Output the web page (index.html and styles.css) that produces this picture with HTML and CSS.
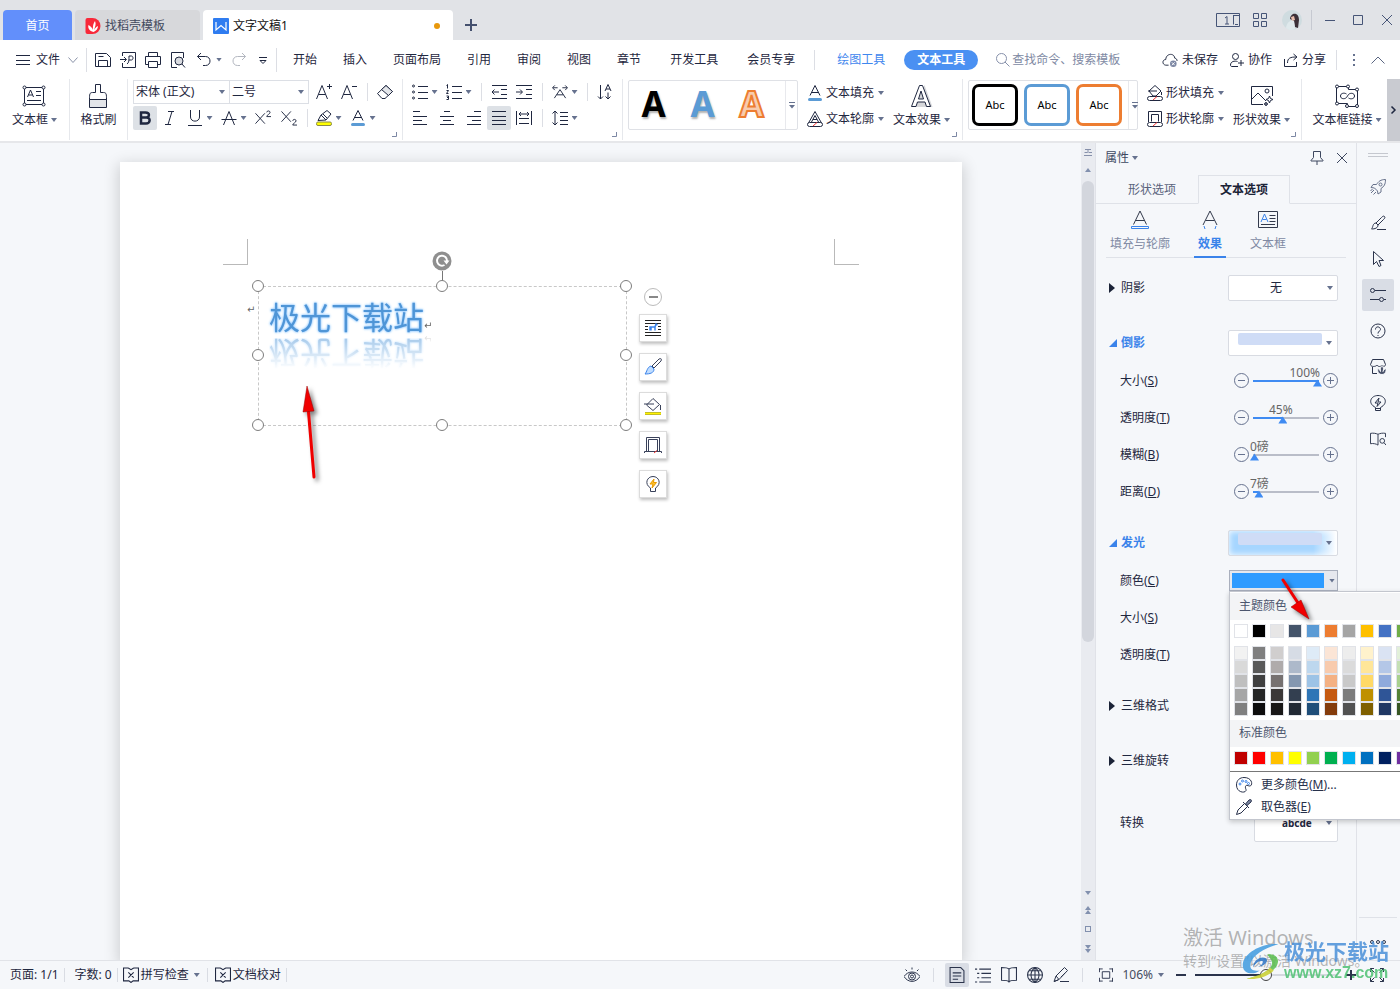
FILE: index.html
```html
<!DOCTYPE html>
<html lang="zh-CN">
<head>
<meta charset="utf-8">
<title>文字文稿1</title>
<link rel="stylesheet" href="styles.css">
</head>
<body>
<svg class="sprite" aria-hidden="true">
  <symbol id="plus" viewBox="0 0 12 12"><path d="M6 0v12M0 6h12" stroke-width="2"/></symbol>
  <symbol id="menu" viewBox="0 0 14 12"><path d="M0 1.500h14M0 6.500h14M0 10.500h14"/></symbol>
  <symbol id="down" viewBox="0 0 10 6"><path d="M.5.5 5 5.500 9.500.5"/></symbol>
  <symbol id="up" viewBox="0 0 14 8"><path d="M.5 7.500 7 1l6.500 6.500"/></symbol>
  <symbol id="save" viewBox="0 0 16 16"><path d="M.5 1.500h11l4 4v9h-15zM3.500 14.500v-6h9v6M3.500 4.500h5"/></symbol>
  <symbol id="pdf" viewBox="0 0 16 16"><path d="M2.500 4V.5h13v15h-13V11M0 7.500h6M4 5l2.500 2.500L4 10M7 12c2-1 2-4 2-8h2.500c2 0 2 4 0 4H9"/></symbol>
  <symbol id="print" viewBox="0 0 16 16"><path d="M3.500 4.500v-4h9v4M3.500 12.500h-3v-8h15v8h-3M3.500 9.500h9v6h-9z"/></symbol>
  <symbol id="preview" viewBox="0 0 16 16"><path d="M7 15.500H1.500V.5h12V6M12 12l3 3.500"/><circle cx="9" cy="9" r="4" fill="#d9dbe0"/></symbol>
  <symbol id="undo" viewBox="0 0 16 16"><path d="M5 1 1.500 4.500 5 8M1.500 4.500h8c6 0 6 9 0 9H7"/></symbol>
  <symbol id="redo" viewBox="0 0 16 16"><path d="M11 1l3.500 3.500L11 8M14.500 4.500h-8c-6 0-6 9 0 9H9"/></symbol>
  <symbol id="more" viewBox="0 0 8 8"><path d="M0 1.500h8M1 4.500l3 3 3-3z"/></symbol>
  <symbol id="gmore" viewBox="0 0 6 7"><path d="M0 .5h6"/><path d="M0 3h6L3 6.500z" fill="currentColor" stroke="none"/></symbol>
  <symbol id="search" viewBox="0 0 14 14"><circle cx="5.500" cy="5.500" r="5"/><path d="M9 9l4.500 4.500"/></symbol>
  <symbol id="cloud" viewBox="0 0 17 16"><path d="M7 13.500H4C0 13 0 7.500 4 7.500 4 1 13 0 13.500 6c2 .5 2.500 1.500 2.500 3"/><circle cx="12" cy="12" r="3.500" fill="#7c87a3" stroke="none"/><path d="M10.500 10.500l3 3m0-3l-3 3" stroke="#fff"/></symbol>
  <symbol id="person" viewBox="0 0 14 14"><circle cx="5.500" cy="3.500" r="3"/><path d="M7.500 8.500c-3-1-7 0-7 3.500 0 1 .5 1.500 1.500 1.500H8M11 7v6M8 10h6"/></symbol>
  <symbol id="share" viewBox="0 0 14 14"><path d="M.5 6v7.500h12V9M3.500 10c0-5 3-6 8.500-6M9.500 1l3.500 3-3.500 3"/></symbol>
  <symbol id="textbox" viewBox="0 0 24 22"><path d="M2.500 2.500h19v17h-19zM5.500 12 8.500 5l3 7M6.500 10h4M14 6.500h5M14 10.500h5M5 15.500h14"/><g fill="#fff"><circle cx="2.500" cy="2.500" r="1.500"/><circle cx="21.500" cy="2.500" r="1.500"/><circle cx="2.500" cy="19.500" r="1.500"/><circle cx="21.500" cy="19.500" r="1.500"/></g></symbol>
  <symbol id="brush" viewBox="0 0 20 24"><path d="M1.500 15.500h17v8h-17z" fill="#e3e5e9"/><path d="M7.500.5h5v8h3c3 0 3 2 3 7h-17c0-5 0-7 3-7h3z"/></symbol>
  <symbol id="agrow" viewBox="0 0 16 16"><path d="M.5 15 6 1.500 11.500 15M2.500 10.500h7M11 2.500h5M13.500 0v5"/></symbol>
  <symbol id="ashrink" viewBox="0 0 16 16"><path d="M.5 15 6 1.500 11.500 15M2.500 10.500h7M11 2.500h5"/></symbol>
  <symbol id="eraser" viewBox="0 0 16 16"><path d="M.5 9.500 9 1.500l6.500 6L8 14.500H5z"/><path d="M4.500 5.500l7 6 4-4-6.500-6z" fill="#e3e5e9"/></symbol>
  <symbol id="bold" viewBox="0 0 12 14"><path d="M2 1.500h4.500c5 0 4 5 .5 5H2h5.500c4.500 0 4 6-.5 6H2z" stroke-width="2.500"/></symbol>
  <symbol id="italic" viewBox="0 0 12 14"><path d="M4 .5h6M1 13.500h6M8 .5 4 13.500"/></symbol>
  <symbol id="under" viewBox="0 0 14 16"><path d="M2.500 0v7c0 5.500 9 5.500 9 0V0M0 15.500h14"/></symbol>
  <symbol id="strike" viewBox="0 0 15 16"><path d="M2 15 7.500 1.500 13 15M0 9.500h15"/></symbol>
  <symbol id="sup" viewBox="0 0 17 16"><path d="M.5 3l10 11M10.500 3l-10 11M12.500 2c0-2 3.500-2 3.500 0s-3.500 2.500-3.500 4.500H17"/></symbol>
  <symbol id="sub" viewBox="0 0 17 16"><path d="M.5 1l10 11M10.500 1l-10 11M12.500 11c0-2 3.500-2 3.500 0s-3.500 2.500-3.500 4.500H17"/></symbol>
  <symbol id="marker" viewBox="0 0 16 16"><path d="M2 10.500 5 5l6-4.500L15 4l-5 6zM5 5l5 5M7 4l4 4"/><rect x=".5" y="12" width="15" height="3.500" rx="1.500" fill="#ffff00" stroke="#8a8a4a"/></symbol>
  <symbol id="acolor" viewBox="0 0 16 16"><path d="M3 10.500 8 .5l5 10M5 7.500h6"/><rect x="1" y="13" width="14" height="3" rx="1.500" fill="#5b9bd5" stroke="none"/></symbol>
  <symbol id="bullets" viewBox="0 0 16 16"><path d="M6 2.500h10M6 8.500h10M6 14.500h10"/><circle cx="1.500" cy="2" r="1"/><circle cx="1.500" cy="8" r="1"/><circle cx="1.500" cy="14" r="1"/></symbol>
  <symbol id="numbers" viewBox="0 0 16 16"><path d="M6 2.500h10M6 8.500h10M6 14.500h10M.5 1.500l1-1v4M.5 6.500h2l-2 3h2M.5 12h2v3.500h-2m.5-2h1.500"/></symbol>
  <symbol id="outdent" viewBox="0 0 16 16"><path d="M1 1.500h15M10 5.500h6M10 10.500h6M1 14.500h15M1 8h7M3.500 5.500 1 8l2.500 2.500"/></symbol>
  <symbol id="indent" viewBox="0 0 16 16"><path d="M0 1.500h16M10 5.500h6M10 10.500h6M0 14.500h16M0 8h6M4 5.500 6.500 8 4 10.500"/></symbol>
  <symbol id="fit" viewBox="0 0 17 16"><path d="M2.500 14.500l6-9 6 9M5 11h7M1 3.500h5M3 1 .5 3.500 3 6M16 3.500h-5M14 1l2.500 2.500L14 6"/></symbol>
  <symbol id="sort" viewBox="0 0 14 16"><path d="M2.500 1v14M0 12.500 2.500 15 5 12.500M7 7l3-6.500L13 7M8 5h4M10 8.500V15M7.500 12.500 10 15l2.500-2.500"/></symbol>
  <symbol id="left" viewBox="0 0 14 14"><path d="M0 .5h7M0 5.500h14M0 9.500h9M0 13.500h14"/></symbol>
  <symbol id="center" viewBox="0 0 14 14"><path d="M4 .5h6M0 5.500h14M3 9.500h8M0 13.500h14"/></symbol>
  <symbol id="right" viewBox="0 0 14 14"><path d="M7 .5h7M0 5.500h14M5 9.500h9M0 13.500h14"/></symbol>
  <symbol id="just" viewBox="0 0 14 14"><path d="M0 .5h14M0 5.500h14M0 9.500h14M0 13.500h14"/></symbol>
  <symbol id="dist" viewBox="0 0 16 14"><path d="M.5 0v14M15.500 0v14M3 7.500h10M3 12.500h10M3 3h10M5 1 3 3l2 2M11 1l2 2-2 2"/></symbol>
  <symbol id="spacing" viewBox="0 0 16 16"><path d="M3 1v14M.5 3.500 3 1l2.500 2.500M.5 12.500 3 15l2.500-2.500M8 2.500h8M8 6.500h8M8 10.500h8M8 14.500h8"/></symbol>
  <symbol id="aout" viewBox="0 0 16 16"><path d="M1.500 12 8 .5 14.500 12M4.500 11 8 4.500l3.500 6.500M6 8.500h4"/><rect x=".5" y="11.500" width="15" height="4" rx="2" fill="#fff"/><path d="M6 15l4-3.500" stroke="#e33"/></symbol>
  <symbol id="afx" viewBox="0 0 24 24"><path d="M5 23 14.500 1l8 22" fill="#d6d7da" stroke="none"/><path d="M1.500 22.500 9.500 1.500h3l8 21h-4l-1.500-4.500H7.500L6 22.500zM8.500 15h5L11 7z" fill="#fff"/></symbol>
  <symbol id="bucket" viewBox="0 0 16 16"><path d="M2 6 8 .5l6 5.500-5 5H6zM1 6h9M14.500 7v3"/><rect x=".5" y="11.500" width="15" height="4" rx="2" fill="#fff"/><path d="M6 15l4-3.500" stroke="#e33"/></symbol>
  <symbol id="frame" viewBox="0 0 16 16"><path d="M1.500 11V.5h13V11M4.500 10.500v-7h7v7"/><rect x=".5" y="11.500" width="15" height="4" rx="2" fill="#fff"/><path d="M6 15l4-3.500" stroke="#e33"/></symbol>
  <symbol id="picfx" viewBox="0 0 24 24"><path d="M13 20.500H1.500V2.500h21V12M2 15l6-6 8 8"/><circle cx="17" cy="7" r="2"/><path d="M19.500 12l1 2.500 2.500 1-2.500 1-1 2.500-1-2.500-2.500-1 2.500-1zM16 18l.5 1.500 1.500.5-1.500.5L16 22l-.5-1.500L14 20l1.500-.5z"/></symbol>
  <symbol id="link" viewBox="0 0 24 24"><path d="M1.500 2.500h12v3h9v17h-10v-3h-11z"/><path d="M11.500 10c-2-1.500-6-1-6 2s4 3.500 6 1.500l2-3c2-2 6-1.500 6 1.500s-4 3.500-6 2"/><g fill="#fff"><circle cx="2" cy="2.500" r="1.500"/><circle cx="13" cy="2.500" r="1.500"/><circle cx="22" cy="5.500" r="1.500"/><circle cx="2" cy="19.500" r="1.500"/><circle cx="12" cy="22" r="1.500"/><circle cx="22" cy="22" r="1.500"/></g></symbol>
  <symbol id="corner" viewBox="0 0 5 5"><path d="M4.500 0v4.500H0"/></symbol>
  <symbol id="close" viewBox="0 0 10 10"><path d="M0 0l10 10M10 0 0 10"/></symbol>
  <symbol id="pin" viewBox="0 0 14 14"><path d="M3.500.5h7v6l2.500 3v.5H1v-.5l2.500-3zM7 10v4"/></symbol>
  <symbol id="p-fill" viewBox="0 0 18 20"><path d="M2.500 14.500 9 1l6.500 13.500M4.500 10.500h9"/><path d="M.5 16.500h17v2H.5z" stroke="#3a83ea"/></symbol>
  <symbol id="p-fx" viewBox="0 0 18 20"><path d="M2 15 9 1l7 14M4.500 10.500h9"/><path d="M3 16l1 3M15 16l-1 3" stroke="#3a83ea"/></symbol>
  <symbol id="p-box" viewBox="0 0 20 18"><path d="M.5.5h19v16H.5zM11.500 4.500h6M11.500 7.500h6M11.500 10.500h6M3 13.500h14"/><path d="M3 11 6.500 3 10 11M4.500 8.500h4" stroke="#3a83ea"/></symbol>
  <symbol id="rocket" viewBox="0 0 16 16"><path d="M15.500.5c-5 0-7 2-9 5H3l-2 3 3.500.5 3 3L8 15l3-2v-3.500c3-2 4.500-4 4.500-9zM4 11l-3 3M2.500 10 .5 12M6 13l-2.500 2.500"/><circle cx="10.500" cy="5.500" r="1.500"/></symbol>
  <symbol id="pen" viewBox="0 0 16 16"><path d="M14.500 1.500c1 1 0 2-1 3L8 10 6 8l5.500-5.500c1-1 2-2 3-1zM6 8l2 2c0 3-3 4-6.500 4 1.500-1 1-6 4.500-6zM7 14.500h9"/></symbol>
  <symbol id="cursor" viewBox="0 0 16 16"><path d="M3.500.5v13l3-3 2.500 5 2-1-2-5h4.500z"/></symbol>
  <symbol id="sliders" viewBox="0 0 16 16"><circle cx="2.500" cy="3.500" r="2"/><circle cx="11.500" cy="12.500" r="2"/><path d="M5 3.500h11M0 12.500h9M14 12.500h2"/></symbol>
  <symbol id="help" viewBox="0 0 16 16"><circle cx="8" cy="8" r="7"/><path d="M5.500 6.500c0-4 5-3 5 0C10.500 8 8 8 8 10.500M8 12v1"/></symbol>
  <symbol id="shop" viewBox="0 0 16 16"><path d="M2.500.5h11l2 5c0 2-2.500 2.500-3.500.5-1 2-4 2-5 0-1 2-6.500 2-6.500-.5zM2.500 8v6.500H7"/><path d="M12 15.500c-3.500 0-5-3-4-6 1 .5 2 1.500 2.500 3-.5-2 0-4.500 1.500-6 1.500 1.500 2 4 1 6 .5-1.500 1.500-2.500 3-3 .5 3-1 6-4 6z" fill="#4a536b" stroke="#f5f7fa"/></symbol>
  <symbol id="bulb" viewBox="0 0 16 16"><path d="M5.500 12.500C-3 8 1 .5 8 .5s11 7.500 2.500 12v3h-5zM5.500 13.500h5"/><path d="M9 3 5 8h3l-1 3.500L11 7H8z"/></symbol>
  <symbol id="book" viewBox="0 0 17 14"><path d="M8.500 2c-2-1-5-1.500-8-1v11c3-.5 6 0 8 1.500V2c2-1 5-1.500 8-1v4"/><circle cx="13" cy="9" r="2.500"/><path d="M15 11l2 2.500"/></symbol>
  <symbol id="check" viewBox="0 0 15 14"><path d="M5 .5H.5v12h5l2 1.500 2-1.500h5V.5H10M5 .5l2.500 1.500L10 .5M5 4.500l5 5M10 4.500l-5 5"/></symbol>
  <symbol id="eye" viewBox="0 0 16 15"><path d="M0 9c4-6 12-6 16 0-4 6.500-12 6.500-16 0zM8 2V0M3 3.500 1.500 2M13 3.500 14.500 2"/><circle cx="8" cy="9" r="3.500"/><circle cx="8" cy="9" r="1.500"/></symbol>
  <symbol id="page" viewBox="0 0 14 15"><path d="M.5.5h10l3 3v11H.5zM3 5.500h8M3 8.500h8M3 11.500h5"/></symbol>
  <symbol id="outline" viewBox="0 0 15 14"><path d="M0 1.500h2M4 1.500h11M2 5.500h2M6 5.500h9M2 9.500h2M6 9.500h9M0 13.500h2M4 13.500h11"/></symbol>
  <symbol id="read" viewBox="0 0 15 15"><path d="M7.500 2c-1-1-3-1.500-7-1.500v12c4 0 6 0 7 1.500 1-1.500 3-1.500 7-1.500V.5c-4 0-6 .5-7 1.500v12"/></symbol>
  <symbol id="globe" viewBox="0 0 15 15"><circle cx="7.500" cy="7.500" r="7"/><path d="M7.500.5v14M.5 7.500h14M2 3.500h11M2 11.500h11M7.500.5c-5 4-5 10 0 14 5-4 5-10 0-14"/></symbol>
  <symbol id="write" viewBox="0 0 16 16"><path d="M1 14.500 3 9l8.500-8.500 3 3-8.500 9zM1 14.500l4-1.500M7 14.500h9M3 9l3 3.500M8 10l4-4"/></symbol>
  <symbol id="fitpage" viewBox="0 0 15 14"><path d="M0 .5h4M.5 0v4M11 .5h4M14.500 0v4M14.500 10v4M11 13.500h4M0 13.500h4M.5 10v4M3.500 3.500h8v7h-8z"/></symbol>
  <symbol id="full" viewBox="0 0 14 14"><path d="M.5 4V.5H4M10 .5h3.500V4M13.500 10v3.500H10M4 13.500H.5V10M.5.5l4 4M13.500.5l-4 4M13.500 13.500l-4-4M.5 13.500l4-4"/></symbol>
</svg>

<header class="titlebar">
  <nav class="doctabs">
    <button class="doctab home">首页</button>
    <button class="doctab docer"><svg class="logo" viewBox="0 0 15 16"><path d="M2 0h5a8 8 0 010 16H2a2 2 0 01-2-2V2a2 2 0 012-2z" fill="#f8293a"/><path d="M8 14C4 13 2 10 3 7c2 1 4 3 4.500 5C7 8 8 5 9.500 3c1.500 3 0 6-1 9 1-2 2-3 4-4 0 3-2 5-4.500 6z" fill="#fff"/></svg>找稻壳模板</button>
    <button class="doctab active"><svg class="logo" viewBox="0 0 16 16"><rect width="16" height="16" rx="1" fill="#2f7cf0"/><path d="M3 4v8l5-4.500 5 4.500V4" stroke="#fff" stroke-width="1.200" fill="none"/></svg>文字文稿1<i class="dirty"></i></button>
    <button class="newtab" aria-label="新建"><svg class="i12"><use href="#plus"/></svg></button>
  </nav>
  <div class="winctl">
    <svg class="switch" viewBox="0 0 24 14"><path d="M.5.5h23v13H.5zM17.500 2.500v9M9 5l2-1.500V11M9 11h4M17 2.500h6M19 11.500h3"/></svg>
    <svg class="i14" viewBox="0 0 14 14"><path d="M.5.500h5v5h-5zM8.500.5h5v5h-5zM.5 8.500h5v5h-5zM8.500 8.500h5v5h-5z"/></svg>
    <svg class="avatar" viewBox="0 0 20 20"><circle cx="10" cy="10" r="10" fill="#cfdce0" stroke="none"/><path d="M11 4c4-1 6 2 6 6l-1 8-3-1-1-6-4-2c0-2 1-4 3-5z" fill="#3b3038" stroke="none"/><path d="M9 7l3-1 1 4-3 1z" fill="#e9bfae" stroke="none"/><path d="M4 18c1-6 4-8 8-7l1 8c-3 2-7 1-9-1z" fill="#dfe9ec" stroke="none"/></svg>
    <i class="vsep"></i>
    <button aria-label="最小化"><svg class="i10" viewBox="0 0 10 10"><path d="M0 5.500h10"/></svg></button>
    <button aria-label="最大化"><svg class="i10" viewBox="0 0 10 10"><path d="M.5.5h9v9h-9z"/></svg></button>
    <button aria-label="关闭"><svg class="i10"><use href="#close"/></svg></button>
  </div>
</header>

<div class="menubar">
  <button class="filemenu"><svg class="i14"><use href="#menu"/></svg>文件<svg class="chev"><use href="#down"/></svg></button>
  <i class="vsep tall"></i>
  <div class="quick">
    <button aria-label="保存"><svg class="i16"><use href="#save"/></svg></button>
    <button aria-label="输出为PDF"><svg class="i16"><use href="#pdf"/></svg></button>
    <button aria-label="打印"><svg class="i16"><use href="#print"/></svg></button>
    <button aria-label="打印预览"><svg class="i16"><use href="#preview"/></svg></button>
    <button class="undo" aria-label="撤销"><svg class="i16"><use href="#undo"/></svg><i class="caret"></i></button>
    <button class="redo" aria-label="恢复"><svg class="i16"><use href="#redo"/></svg></button>
    <button aria-label="更多"><svg class="i8"><use href="#more"/></svg></button>
  </div>
  <i class="vsep tall"></i>
  <nav class="ribbontabs">
    <a href="#">开始</a><a href="#">插入</a><a href="#">页面布局</a><a href="#">引用</a><a href="#">审阅</a><a href="#">视图</a><a href="#">章节</a><a href="#">开发工具</a><a href="#">会员专享</a>
  </nav>
  <i class="vsep"></i>
  <a class="ctx" href="#">绘图工具</a>
  <a class="ctx pill" href="#">文本工具</a>
  <label class="find"><svg class="i14"><use href="#search"/></svg><input type="text" placeholder="查找命令、搜索模板" aria-label="查找命令"></label>
  <div class="account">
    <button><svg class="i16"><use href="#cloud"/></svg>未保存</button>
    <button><svg class="i14"><use href="#person"/></svg>协作</button>
    <button><svg class="i14"><use href="#share"/></svg>分享</button>
    <i class="vsep"></i>
    <button class="dots" aria-label="更多"><svg class="dotcol" viewBox="0 0 2 12"><path d="M1 0v2M1 5v2M1 10v2" stroke-width="2"/></svg></button>
    <button aria-label="折叠功能区"><svg class="collapse"><use href="#up"/></svg></button>
  </div>
</div>

<div class="ribbon">
  <section class="grp g-box"><button class="big"><svg class="i24"><use href="#textbox"/></svg><span>文本框<i class="caret"></i></span></button></section>
  <section class="grp g-paint"><button class="big"><svg class="i24"><use href="#brush"/></svg><span>格式刷</span></button></section>
  <section class="grp g-font">
    <div class="line">
      <span class="combo family"><select aria-label="字体"><option>宋体 (正文)</option></select><i class="caret"></i></span><span class="combo size"><select aria-label="字号"><option>二号</option></select><i class="caret"></i></span>
      <button class="tb first" aria-label="增大字号"><svg class="i16"><use href="#agrow"/></svg></button>
      <button class="tb" aria-label="减小字号"><svg class="i16"><use href="#ashrink"/></svg></button>
      <i class="vsep"></i>
      <button class="tb" aria-label="清除格式"><svg class="i16"><use href="#eraser"/></svg></button>
    </div>
    <div class="line">
      <button class="tb on" aria-label="加粗"><svg class="i14"><use href="#bold"/></svg></button>
      <button class="tb" aria-label="倾斜"><svg class="i14"><use href="#italic"/></svg></button>
      <button class="tb dd" aria-label="下划线"><svg class="i16"><use href="#under"/></svg><i class="caret"></i></button>
      <button class="tb dd" aria-label="删除线"><svg class="i16"><use href="#strike"/></svg><i class="caret"></i></button>
      <button class="tb wide" aria-label="上标"><svg class="i16"><use href="#sup"/></svg></button>
      <button class="tb wide" aria-label="下标"><svg class="i16"><use href="#sub"/></svg></button>
      <i class="vsep"></i>
      <button class="tb dd" aria-label="突出显示"><svg class="i16"><use href="#marker"/></svg><i class="caret"></i></button>
      <button class="tb dd" aria-label="字体颜色"><svg class="i16"><use href="#acolor"/></svg><i class="caret"></i></button>
    </div>
    <svg class="launch"><use href="#corner"/></svg>
  </section>
  <section class="grp g-para">
    <div class="line">
      <button class="tb dd" aria-label="项目符号"><svg class="i16"><use href="#bullets"/></svg><i class="caret"></i></button>
      <button class="tb dd" aria-label="编号"><svg class="i16"><use href="#numbers"/></svg><i class="caret"></i></button>
      <i class="vsep"></i>
      <button class="tb" aria-label="减少缩进"><svg class="i16"><use href="#outdent"/></svg></button>
      <button class="tb" aria-label="增加缩进"><svg class="i16"><use href="#indent"/></svg></button>
      <i class="vsep"></i>
      <button class="tb dd" aria-label="中文版式"><svg class="i16"><use href="#fit"/></svg><i class="caret"></i></button>
      <i class="vsep"></i>
      <button class="tb" aria-label="排序"><svg class="i16"><use href="#sort"/></svg></button>
    </div>
    <div class="line">
      <button class="tb al" aria-label="左对齐"><svg class="i14"><use href="#left"/></svg></button>
      <button class="tb al" aria-label="居中"><svg class="i14"><use href="#center"/></svg></button>
      <button class="tb al last" aria-label="右对齐"><svg class="i14"><use href="#right"/></svg></button>
      <button class="tb on" aria-label="两端对齐"><svg class="i14"><use href="#just"/></svg></button>
      <button class="tb" aria-label="分散对齐"><svg class="i16"><use href="#dist"/></svg></button>
      <i class="vsep"></i>
      <button class="tb dd" aria-label="行距"><svg class="i16"><use href="#spacing"/></svg><i class="caret"></i></button>
    </div>
    <svg class="launch"><use href="#corner"/></svg>
  </section>
  <section class="grp g-art">
    <div class="gallery arts">
      <button class="art black">A</button><button class="art blue">A</button><button class="art orange">A</button>
      <button class="galmore" aria-label="更多样式"><svg class="i6"><use href="#gmore"/></svg></button>
    </div>
  </section>
  <section class="grp g-text">
    <div class="stack">
      <button><svg class="i16"><use href="#acolor"/></svg>文本填充<i class="caret"></i></button>
      <button><svg class="i16"><use href="#aout"/></svg>文本轮廓<i class="caret"></i></button>
    </div>
    <button class="big"><svg class="i24"><use href="#afx"/></svg><span>文本效果<i class="caret"></i></span></button>
    <svg class="launch"><use href="#corner"/></svg>
  </section>
  <section class="grp g-shape">
    <div class="gallery shapes">
      <button class="shape k">Abc</button><button class="shape b">Abc</button><button class="shape o">Abc</button>
      <button class="galmore" aria-label="更多样式"><svg class="i6"><use href="#gmore"/></svg></button>
    </div>
    <div class="stack">
      <button><svg class="i16"><use href="#bucket"/></svg>形状填充<i class="caret"></i></button>
      <button><svg class="i16"><use href="#frame"/></svg>形状轮廓<i class="caret"></i></button>
    </div>
    <button class="big"><svg class="i24"><use href="#picfx"/></svg><span>形状效果<i class="caret"></i></span></button>
    <svg class="launch"><use href="#corner"/></svg>
  </section>
  <section class="grp g-link"><button class="big"><svg class="i24"><use href="#link"/></svg><span>文本框链接<i class="caret"></i></span></button></section>
  <button class="scrollright" aria-label="向右滚动"><svg class="rchev" viewBox="0 0 5 8"><path d="M.5.5 4 4 .5 7.500" stroke-width="1.500"/></svg></button>
</div>

<main class="work">
  <div class="canvas">
    <article class="sheet">
      <i class="crop tl"></i><i class="crop tr"></i>
      <span class="mark outer">↵</span>
      <div class="shapebox">
        <p class="wordart">极光下载站</p><span class="mark inner">↵</span>
        <i class="stem"></i>
        <svg class="rotate" viewBox="0 0 20 20"><circle cx="10" cy="10" r="9.500" fill="#8f8f8f" stroke="none"/><path d="M12.500 14A5 5 0 1115 10" stroke="#fff" stroke-width="2"/><path d="M11.500 9.500h6l-3 4z" fill="#fff" stroke="none"/></svg>
        <i class="h n w"></i><i class="h n c"></i><i class="h n e"></i>
        <i class="h m w"></i><i class="h m e"></i>
        <i class="h s w"></i><i class="h s c"></i><i class="h s e"></i>
      </div>
      <div class="floatbar">
        <button class="fold" aria-label="收起"></button>
        <button class="fb" aria-label="布局选项"><svg class="i18" viewBox="0 0 18 18"><path d="M1 1.500h16M1 4.500h16M1 7.500h3M14 7.500h3M1 10.500h3M14 10.500h3M1 13.500h16M1 16.500h16" stroke="#222"/><path d="M6 11.500V8h5l1-3 1.500 1M7 8v3.500M11 8v3.500" stroke="#3a83ea" stroke-width="1.500"/></svg></button>
        <button class="fb" aria-label="形状样式"><svg class="i18" viewBox="0 0 18 18"><path d="M8 8l7-7c2-1 3 0 2 2l-7 7z"/><path d="M7 8l3 3c0 4-4 5-9 5 2-2 2-7 6-8z" fill="#bfdcff" stroke="#3a83ea"/></svg></button>
        <button class="fb" aria-label="形状填充"><svg class="i18" viewBox="0 0 18 18"><path d="M2.500 8 9 1.500l6.500 6-6.500 6zM0 7h10M16.500 8v5"/><path d="M1 16.500h16" stroke="#8a8a4a" stroke-width="3"/><path d="M1 16.500h16" stroke="#fff200" stroke-width="2"/></svg></button>
        <button class="fb" aria-label="形状轮廓"><svg class="i18" viewBox="0 0 18 18"><path d="M2.500 15V1.500h13V15M4.500 15V3.500h9V15M.5 17v-1.500h17V17"/><path d="M10 17l3-2.500" stroke="#e33"/></svg></button>
        <button class="fb" aria-label="智能推荐"><svg class="i18" viewBox="0 0 18 18"><path d="M6.500 13C0 9 3 1.500 9 1.500S18 9 11.500 13v3.500h-5V13z"/><path d="M10 4 6 9h3l-1 4 4.500-5.500h-3z" fill="#ffc22e" stroke="#e99a00"/></svg></button>
      </div>
      <svg class="redarrow one" viewBox="0 0 30 104"><path d="M8.500 30 14 95" stroke="#f00000" stroke-width="3" stroke-linecap="round"/><path d="M7 4 3 30l11-1z" fill="#f00000" stroke="#900" stroke-width=".5"/></svg>
    </article>
  </div>

  <div class="vscroll">
    <svg class="ruler" viewBox="0 0 8 8"><path d="M1 1.500h6M4 1v4M.5 4.500h3M5 4.500h3M0 7.500h8"/></svg>
    <i class="tri upw"></i>
    <div class="track"><i class="thumb"></i></div>
    <i class="tri dnw"></i>
    <span class="pair"><i class="tri upw"></i><i class="tri upw"></i></span>
    <i class="sq"></i>
    <span class="pair"><i class="tri dnw"></i><i class="tri dnw"></i></span>
  </div>

  <aside class="panel">
    <header class="panelhead"><button>属性<i class="caret"></i></button><span class="tools"><button aria-label="固定"><svg class="i14"><use href="#pin"/></svg></button><button aria-label="关闭"><svg class="i10"><use href="#close"/></svg></button></span></header>
    <div class="tabs"><button>形状选项</button><button class="sel">文本选项</button></div>
    <div class="subtabs">
      <button><svg class="i20"><use href="#p-fill"/></svg>填充与轮廓</button>
      <button class="sel"><svg class="i20"><use href="#p-fx"/></svg>效果</button>
      <button><svg class="i20"><use href="#p-box"/></svg>文本框</button>
    </div>
    <div class="props">
      <div class="sec"><label for="shadow"><i class="tw"></i>阴影</label><span class="combo pick"><select id="shadow"><option>无</option></select><i class="caret"></i></span></div>
      <div class="sec"><button class="open"><i class="tw"></i>倒影</button><button class="pick reflect" aria-label="倒影样式"><i class="bar"></i><i class="caret"></i></button></div>
      <div class="subs">
        <div class="row"><label for="r1">大小(<u>S</u>)</label><div class="sl"><button class="step minus" aria-label="减"></button><div class="rng"><output class="hi">100%</output><input id="r1" type="range" value="100" style="--v:100%"></div><button class="step add" aria-label="加"></button></div></div>
        <div class="row"><label for="r2">透明度(<u>T</u>)</label><div class="sl"><button class="step minus" aria-label="减"></button><div class="rng"><output class="mid">45%</output><input id="r2" type="range" value="45" style="--v:45%"></div><button class="step add" aria-label="加"></button></div></div>
        <div class="row"><label for="r3">模糊(<u>B</u>)</label><div class="sl"><button class="step minus" aria-label="减"></button><div class="rng"><output>0磅</output><input id="r3" type="range" value="0" style="--v:0%"></div><button class="step add" aria-label="加"></button></div></div>
        <div class="row"><label for="r4">距离(<u>D</u>)</label><div class="sl"><button class="step minus" aria-label="减"></button><div class="rng"><output>7磅</output><input id="r4" type="range" value="7" style="--v:7%"></div><button class="step add" aria-label="加"></button></div></div>
      </div>
      <div class="sec"><button class="open"><i class="tw"></i>发光</button><button class="pick glow" aria-label="发光样式"><i class="bar"></i><i class="caret"></i></button></div>
      <div class="subs">
        <div class="row colorrow"><label for="gc">颜色(<u>C</u>)</label><button id="gc" class="colorbtn"><i class="fill"></i><i class="caret"></i></button>
          <div class="popup">
            <h3>主题颜色</h3>
            <div class="swatches" id="theme"></div>
            <div class="swatches" id="shades"></div>
            <h3>标准颜色</h3>
            <div class="swatches" id="standard"></div>
            <hr>
            <button class="item"><svg class="i16" viewBox="0 0 16 16"><path d="M8 .5c10 0 9 11 4 8-3-1-3 2-2 4 1 4-9.500 4-9.500-4.500C.5 3 4 .5 8 .5z"/><g stroke="#3a83ea"><circle cx="4" cy="7" r="1"/><circle cx="6.500" cy="4" r="1"/><circle cx="10" cy="4.500" r="1"/><circle cx="12.500" cy="6.500" r="1"/></g></svg><span>更多颜色(<u>M</u>)...</span></button>
            <button class="item"><svg class="i16" viewBox="0 0 16 16"><path d="M8.500 4.500 2 11l-1.500 4.500L5 14l6.500-6.500M7 3l6 6"/><path d="M9.500 5 13 1c2-1 3 0 2 2l-4 3.500z" fill="#7c87a3"/></svg><span>取色器(<u>E</u>)</span></button>
          </div>
          <svg class="redarrow two" viewBox="0 0 40 54"><path d="M6 6l17 26" stroke="#f00000" stroke-width="3" stroke-linecap="round"/><path d="M32 45 14 33l10-7z" fill="#f00000" stroke="#900" stroke-width=".5"/></svg>
        </div>
        <div class="row"><label>大小(<u>S</u>)</label></div>
        <div class="row"><label>透明度(<u>T</u>)</label></div>
      </div>
      <div class="sec"><button><i class="tw"></i>三维格式</button></div>
      <div class="sec"><button><i class="tw"></i>三维旋转</button></div>
      <div class="sec last"><label for="cv">转换</label><button id="cv" class="pick convert">abcde<i class="caret"></i></button></div>
    </div>
  </aside>

  <nav class="rail">
    <i class="grip"></i>
    <button class="dim" aria-label="快捷"><svg class="i16"><use href="#rocket"/></svg></button>
    <button aria-label="样式"><svg class="i16"><use href="#pen"/></svg></button>
    <button aria-label="选择"><svg class="i16"><use href="#cursor"/></svg></button>
    <button class="on" aria-label="属性"><svg class="i16"><use href="#sliders"/></svg></button>
    <button aria-label="帮助"><svg class="i16"><use href="#help"/></svg></button>
    <button aria-label="资源"><svg class="i16"><use href="#shop"/></svg></button>
    <button aria-label="推荐"><svg class="i16"><use href="#bulb"/></svg></button>
    <button aria-label="查阅"><svg class="i16"><use href="#book"/></svg></button>
    <button class="end" aria-label="更多"><svg class="i16" viewBox="0 0 16 16"><circle cx="2" cy="8" r="1.500"/><circle cx="8" cy="8" r="1.500"/><circle cx="14" cy="8" r="1.500"/></svg></button>
  </nav>
</main>

<footer class="status">
  <div class="info">
    <span>页面: 1/1</span><i class="vsep"></i><span>字数: 0</span><i class="vsep"></i>
    <button><svg class="i16"><use href="#check"/></svg>拼写检查<i class="caret"></i></button><i class="vsep"></i>
    <button><svg class="i16"><use href="#check"/></svg>文档校对</button><i class="vsep"></i>
  </div>
  <div class="views">
    <button aria-label="护眼模式"><svg class="i16"><use href="#eye"/></svg></button><i class="vsep"></i>
    <button class="on" aria-label="页面视图"><svg class="i16"><use href="#page"/></svg></button>
    <button aria-label="大纲"><svg class="i16"><use href="#outline"/></svg></button>
    <button aria-label="阅读版式"><svg class="i16"><use href="#read"/></svg></button>
    <button aria-label="Web版式"><svg class="i16"><use href="#globe"/></svg></button>
    <button aria-label="写作模式"><svg class="i16"><use href="#write"/></svg></button><i class="vsep"></i>
    <button aria-label="最佳显示比例"><svg class="i14"><use href="#fitpage"/></svg></button>
    <button class="pct">106%<i class="caret"></i></button>
    <button class="zo" aria-label="缩小"></button>
    <input class="zoom" type="range" min="0" max="100" value="50" aria-label="显示比例">
    <button class="zi" aria-label="放大"><svg class="i10" viewBox="0 0 10 10"><path d="M5 0v10M0 5h10" stroke-width="2"/></svg></button>
    <button aria-label="全屏"><svg class="i14"><use href="#full"/></svg></button>
  </div>
</footer>

<div class="activate"><strong>激活 Windows</strong><span>转到“设置”以激活 Windows。</span></div>
<div class="sitemark">
  <svg class="swirl" viewBox="0 0 46 42"><path d="M40 2C20 0 0 14 2 26c1 8 12 9 18 4-7 1-10-1-10-5C10 15 24 6 40 2z" fill="#3f9be0" stroke="none"/><path d="M28 13c10-2 15 6 9 14-7 8-18 12-31 12 12-3 22-7 26-13 3-5 0-8-4-13z" fill="#5bbf4e" stroke="none"/><path d="M6 39c12-3 20-6 25-12l4 3C28 37 18 40 6 39z" fill="#c9cf2c" stroke="none"/><path d="M13 27c0-8 8-13 14-10 3 3-2 9-9 9 4-1 6-4 5-6-4-1-8 3-10 7z" fill="#2d74c4" stroke="none"/></svg>
  <div class="names"><b>极光下载站</b><em>www.xz7.com</em></div>
</div>
<script src="colors.js"></script>
</body>
</html>
```

FILE: styles.css
```css
* { box-sizing: border-box; }
html, body { height: 100%; }
body {
  margin: 0;
  display: flex;
  flex-direction: column;
  overflow: hidden;
  position: relative;
  background: #f5f7fa;
  color: #1f2740;
  font: 12px/16px "Noto Sans", "Noto Sans CJK SC", sans-serif;
}
button, input, select { font: inherit; color: inherit; background: none; border: 0; padding: 0; margin: 0; }
button { display: flex; align-items: center; justify-content: center; white-space: nowrap; flex: none; }
a { color: inherit; text-decoration: none; white-space: nowrap; }
h3, p { margin: 0; font-weight: normal; }
svg { fill: none; stroke: currentColor; flex: none; display: block; overflow: visible; }
.sprite { position: absolute; width: 0; height: 0; }
.i6 { width: 6px; height: 7px; }
.i8 { width: 8px; height: 8px; }
.i10 { width: 10px; height: 10px; }
.i12 { width: 12px; height: 12px; }
.i14 { width: 14px; height: 14px; }
.i16 { width: 16px; height: 16px; }
.i18 { width: 18px; height: 18px; }
.i20 { width: 20px; height: 20px; }
.i24 { width: 24px; height: 24px; }
.caret { flex: none; width: 6px; height: 4px; background: #66728f; clip-path: polygon(0 0, 100% 0, 50% 100%); }
.vsep { flex: none; width: 1px; height: 20px; background: #dcdee4; }

/* title bar */
.titlebar { flex: none; height: 40px; display: flex; justify-content: space-between; background: #e1e3e7; }
.doctabs { display: flex; align-items: flex-end; gap: 3px; padding-left: 3px; }
.doctab { height: 30px; border-radius: 4px 4px 0 0; justify-content: flex-start; gap: 4px; padding: 2px 10px 0; }
.doctab.home { width: 69px; justify-content: center; background: #628ffb; color: #fff; }
.doctab.docer { width: 125px; background: #d7d8db; color: #434a5e; }
.doctab.active { width: 250px; background: #fff; color: #111; }
.logo { width: 16px; height: 16px; stroke: none; }
.dirty { width: 6px; height: 6px; border-radius: 50%; background: #e8980c; margin: 0 3px 0 auto; }
.newtab { width: 30px; height: 30px; color: #44506e; }
.winctl { display: flex; align-items: center; height: 40px; padding-right: 8px; color: #465577; }
.switch { width: 24px; height: 14px; margin-right: 13px; }
.avatar { width: 20px; height: 20px; margin: 0 9px 0 15px; }
.winctl button { width: 28px; height: 28px; }
.winctl button:last-child { width: 10px; margin-left: 10px; }
.winctl .vsep { margin-right: 4px; background: #c6c9d1; }

/* menu row */
.menubar { flex: none; height: 39px; display: flex; align-items: center; background: #fff; padding-left: 16px; }
.filemenu { gap: 6px; }
.chev { width: 10px; height: 6px; margin: 0 8px 0 2px; color: #8a93a8; }
.vsep.tall { height: 24px; }
.quick { display: flex; align-items: center; gap: 9px; padding: 0 9px 0 8px; }
.quick .undo { gap: 4px; margin-left: 1px; }
.quick .redo { color: #b3b7c0; margin: 0 3px 0 0; }
.ribbontabs { display: flex; gap: 26px; padding: 0 19px 0 16px; }
.ribbontabs a:nth-child(n+8) { margin-left: 3px; }
.ctx { color: #3f87ee; margin-left: 22px; }
.pill { height: 20px; line-height: 20px; border-radius: 10px; padding: 0 13px; margin-left: 19px; background: #4a90f2; color: #fff; font-weight: bold; }
.find { display: flex; align-items: center; gap: 2px; margin-left: 18px; color: #8690aa; }
.find input { width: 118px; }
.find input::placeholder { color: #8089a3; opacity: 1; }
.account { display: flex; align-items: center; gap: 12px; margin-left: auto; padding-right: 15px; }
.account button { gap: 4px; }
.account .dots { width: 10px; }
.dotcol { width: 2px; height: 12px; color: #66728f; }
.account .vsep { margin-left: -2px; }
.collapse { width: 14px; height: 8px; color: #5a6581; }

/* ribbon */
.ribbon { flex: none; height: 64px; display: flex; background: #fff; border-bottom: 2px solid #e6e7ea; }
.grp { flex: none; position: relative; display: flex; height: 61px; border-right: 1px solid #e6e8ec; }
.big { flex-direction: column; justify-content: flex-start; gap: 4px; padding-top: 5px; }
.big span { display: flex; align-items: center; gap: 3px; }
.g-box { width: 70px; justify-content: center; }
.g-paint { width: 58px; justify-content: center; }
.g-font { width: 275px; padding-left: 5px; }
.g-font, .g-para { flex-direction: column; gap: 2px; padding-top: 1px; }
.g-para { width: 220px; padding-left: 5px; }
.line { display: flex; align-items: center; height: 24px; }
.line .vsep { height: 18px; margin: 0 5px; }
.tb { width: 24px; height: 24px; border-radius: 2px; gap: 4px; margin-right: 1px; }
.tb.first { margin-left: 3px; }
.tb.dd { width: 33px; }
.tb.wide { margin-right: 2px; }
.tb.al { margin-right: 3px; }
.tb.al.last { margin-right: 1px; }
.tb.on { background: #dde1e6; }
.g-font .line:last-of-type .vsep { margin: 0 4px; }
.combo { position: relative; display: flex; align-items: center; height: 24px; border: 1px solid #dcdfe5; background: #fff; flex: none; }
.combo select { appearance: none; width: 100%; height: 100%; padding-left: 2px; outline: 0; }
.combo .caret { position: absolute; right: 4px; }
.family { width: 97px; }
.size { width: 80px; margin-left: -1px; }
.launch { position: absolute; right: 5px; bottom: 3px; width: 5px; height: 5px; color: #7c87a3; }
.gallery { display: flex; align-items: center; height: 50px; border: 1px solid #dfe1e6; border-radius: 2px; margin-top: 1px; flex: none; }
.galmore { width: 12px; align-self: stretch; border-left: 1px solid #e8e9ed; color: #66728f; }
.g-art { border: 0; padding-left: 5px; width: 175px; }
.arts { width: 170px; }
.art { width: 49px; font: bold 35px/46px "Noto Sans", sans-serif; padding-bottom: 2px; text-shadow: 1px 2px 2px rgba(0,0,0,.3); }
.arts .galmore { margin-left: auto; }
.black { color: #000; }
.blue { color: #5b9bd5; }
.orange { color: #f8cbad; -webkit-text-stroke: 2px #ed7d31; text-shadow: none; }
.g-text { width: 165px; padding-left: 9px; gap: 9px; }
.stack { display: flex; flex-direction: column; gap: 2px; padding-top: 2px; }
.stack button { height: 24px; gap: 3px; justify-content: flex-start; }
.stack button .caret { margin-left: 1px; }
.g-shape { width: 339px; padding-left: 5px; gap: 9px; }
.shapes { width: 170px; padding-left: 3px; gap: 6px; }
.shape { width: 46px; height: 42px; border: 3px solid; border-radius: 7px; font-size: 11px; }
.shapes .galmore { margin-left: auto; }
.shape.k { border-color: #000; color: #000; }
.shape.b { border-color: #5b9bd5; color: #000; }
.shape.o { border-color: #ed7d31; color: #000; }
.g-link { flex: 1; border: 0; justify-content: center; padding-left: 5px; }
.scrollright { width: 13px; background: #c9cbd1; }
.rchev { width: 5px; height: 8px; }

/* work area */
.work { flex: 1; min-height: 0; display: flex; }
.canvas { flex: 1; min-width: 0; padding: 19px 119px 0 120px; overflow: hidden; }
.sheet { position: relative; height: 100%; background: #fff; box-shadow: 0 4px 14px 2px rgba(0,0,0,.16); }
.crop { position: absolute; top: 77px; width: 25px; height: 26px; border-bottom: 1px solid #b9b9b9; }
.crop.tl { left: 103px; border-right: 1px solid #b9b9b9; }
.crop.tr { right: 103px; border-left: 1px solid #b9b9b9; }
.mark { position: absolute; font: 10px/12px "DejaVu Sans", sans-serif; color: #666; }
.mark.outer { left: 127px; top: 142px; }
.mark.inner { left: 165px; top: 33px; -webkit-box-reflect: below 0 linear-gradient(transparent, rgba(0,0,0,.4)); }
.shapebox { position: absolute; left: 138px; top: 124px; width: 369px; height: 140px; border: 1px dashed #c8c8c8; }
.wordart {
  position: absolute; left: 10px; top: 12px;
  font: 400 31px/34px "Noto Sans CJK SC", sans-serif; color: #4f95d6; white-space: nowrap;
  text-shadow: 0 0 2px #8cc6ff, 0 0 3px #8cc6ff;
  -webkit-box-reflect: below 5px linear-gradient(transparent 8%, rgba(0,0,0,.5));
}
.stem { position: absolute; left: 183px; top: -16px; width: 1px; height: 16px; background: #777; }
.rotate { position: absolute; left: 173px; top: -36px; width: 20px; height: 20px; }
.h { position: absolute; width: 12px; height: 12px; margin: -7px; border: 1px solid #7d7d7d; border-radius: 50%; background: #fff; }
.h.n { top: 0; } .h.m { top: 50%; } .h.s { top: 100%; }
.h.w { left: 0; } .h.c { left: 50%; } .h.e { left: 100%; }
.h.e { margin-left: -6px; }
.h.s { margin-top: -6px; }
.floatbar { position: absolute; left: 519px; top: 126px; display: flex; flex-direction: column; align-items: center; gap: 11px; color: #39415a; }
.fold { width: 18px; height: 18px; border: 1px solid #bbb; border-radius: 50%; margin-bottom: -3px; }
.fold::before { content: ""; width: 9px; height: 2px; background: #888; }
.fb { width: 28px; height: 28px; background: #fff; border: 1px solid #dcdcdc; box-shadow: 1px 2px 3px rgba(0,0,0,.25); }
.redarrow { position: absolute; filter: drop-shadow(3px 3px 2px rgba(0,0,0,.5)); }
.one { left: 180px; top: 220px; width: 30px; height: 104px; }

/* vertical scrollbar */
.vscroll { flex: none; width: 15px; display: flex; flex-direction: column; align-items: center; background: #e9ebf0; padding-bottom: 7px; border-right: 1px solid #e0e2e8; }
.ruler { width: 8px; height: 8px; margin: 5px 0 11px; color: #8690aa; }
.tri { flex: none; width: 6px; height: 4px; background: #8290ae; margin: 1px 0; }
.upw { clip-path: polygon(50% 0, 100% 100%, 0 100%); }
.dnw { clip-path: polygon(0 0, 100% 0, 50% 100%); }
.track { flex: 1; width: 12px; margin: 8px 0 10px; }
.thumb { display: block; height: 66%; border-radius: 6px; background: #d3d6dd; }
.pair { margin-top: 10px; }
.pair .tri { display: block; margin: 0; }
.sq { width: 6px; height: 6px; border: 1px solid #8290ae; margin: 12px 0 3px; }

/* property panel */
.panel { flex: none; width: 261px; border-right: 1px solid #e0e2e8; }
.panelhead { display: flex; justify-content: space-between; align-items: center; height: 32px; padding: 0 9px 2px; color: #3d475f; }
.panelhead button { gap: 3px; }
.tools { display: flex; align-items: center; gap: 13px; }
.tabs { display: flex; height: 29px; padding-left: 10px; border-bottom: 1px solid #dfe2e8; color: #59637c; }
.tabs button { width: 92px; height: 29px; }
.tabs .sel { border: 1px solid #dfe2e8; border-bottom-color: #f5f7fa; font-weight: bold; color: #1b2337; }
.subtabs { display: flex; gap: 24px; height: 54px; margin: 0 10px; padding-left: 4px; border-bottom: 1px solid #dfe2e8; color: #8089a3; }
.subtabs button { flex-direction: column; justify-content: flex-start; gap: 6px; padding-top: 6px; height: 54px; }
.subtabs svg { color: #333a4c; }
.subtabs .sel { width: 32px; border-bottom: 2px solid #3a83ea; color: #3a83ea; font-weight: bold; }
.props { padding: 17px 18px 0 13px; display: flex; flex-direction: column; }
.sec { display: flex; justify-content: space-between; align-items: center; height: 26px; margin-bottom: 29px; }
.sec:has(+ .subs) { margin-bottom: 6px; }
.sec > label, .sec > button:first-child { display: flex; align-items: center; gap: 6px; }
.tw { width: 6px; height: 10px; background: #1b2337; clip-path: polygon(0 0, 100% 50%, 0 100%); }
.open { color: #3a83ea; font-weight: bold; }
.sec > .open:first-child { gap: 4px; }
.open .tw { width: 8px; height: 8px; background: #3a83ea; clip-path: polygon(100% 0, 100% 100%, 0 100%); }
.pick { width: 110px; height: 26px; border: 1px solid #d8dbe2; border-radius: 2px; background: #fff; }
.pick select { text-align: center; padding: 0 18px 0 4px; }
button.pick { justify-content: space-between; padding: 0 5px 0 9px; }
.bar { width: 84px; height: 12px; border-radius: 2px; background: #cfdcf6; margin-bottom: 8px; }
.glow { background: linear-gradient(90deg, #a6d6ff 78%, #fff); box-shadow: inset 0 0 6px #fff; }
.subs { margin-bottom: 20px; padding-left: 11px; }
.row { position: relative; display: flex; justify-content: space-between; align-items: center; height: 37px; }
.sl { display: flex; align-items: center; }
.step { position: relative; width: 15px; height: 15px; border: 1px solid #66728f; border-radius: 50%; }
.step::before { content: ""; width: 7px; height: 1px; background: #66728f; }
.add::after { content: ""; position: absolute; width: 1px; height: 7px; background: #66728f; }
.rng { width: 74px; height: 28px; display: flex; flex-direction: column; padding: 0 1px; color: #666; }
.rng output { line-height: 12px; height: 12px; }
.rng .hi { text-align: right; padding-right: 2px; }
.rng .mid { padding-left: 19px; }
.rng input {
  appearance: none; width: 72px; height: 16px;
  background: linear-gradient(90deg, #3f8bf2 var(--v), #b9bdc8 var(--v)) 3px 1px / 66px 2px no-repeat;
}
.rng input::-webkit-slider-thumb { appearance: none; width: 9px; height: 16px; background: #3f8bf2; clip-path: polygon(50% 1px, 100% 8px, 0 8px); }
.colorbtn { width: 109px; height: 21px; border: 1px solid #a9afbd; background: #e6e8ee; padding: 2px; justify-content: space-between; }
.colorbtn .fill { width: 92px; height: 15px; background: #2e9bff; }
.sec.last { height: 38px; padding-left: 11px; margin-top: 1px; }
button.convert { width: 84px; height: 38px; font-weight: bold; font-size: 10px; padding-left: 27px; }

/* colour popup */
.popup { position: absolute; z-index: 2; left: 109px; top: 29px; width: 190px; padding: 1px 0; background: #fff; border: 1px solid #c3c6ce; box-shadow: 0 2px 5px rgba(0,0,0,.2); }
.popup h3 { font-size: 12px; line-height: 25px; padding: 0 0 2px 9px; background: #f3f4f6; color: #4c566e; }
.swatches { display: grid; grid-template-columns: repeat(10, 14px); column-gap: 4px; padding: 4px; }
.swatches button { height: 14px; border: 1px solid #e1e3e8; }
.popup hr { border: 0; border-top: 1px solid #777; margin: 2px 0; }
.popup .item { height: 22px; gap: 9px; padding-left: 6px; color: #27304a; }
.two { z-index: 3; left: 157px; top: 12px; width: 40px; height: 54px; }

/* right rail */
.rail { flex: none; width: 43px; display: flex; flex-direction: column; align-items: center; gap: 4px; padding: 10px 2px 0 0; color: #2b344c; }
.grip { width: 20px; height: 4px; border: 1px solid #c5c8cf; border-width: 1px 0; margin-bottom: 10px; }
.rail button { width: 32px; height: 32px; border-radius: 2px; }
.rail .on { background: #d9dde5; }
.rail .dim { color: #67718a; }
.rail .end { margin-top: auto; width: 38px; border-top: 1px solid #dfe2e8; border-radius: 0; height: 43px; padding-top: 6px; }

/* status bar */
.status { flex: none; height: 29px; display: flex; justify-content: space-between; background: #f5f7fa; border-top: 1px solid #e1e3e8; }
.info, .views { display: flex; align-items: center; }
.status .vsep { height: 14px; background: #d9dce3; }
.info { gap: 5px; padding-left: 10px; }
.info span + .vsep + span { margin-left: 5px; }
.info button { gap: 2px; }
.info button .caret { margin: 0 2px 0 3px; }
.info button + .vsep { margin-right: 2px; }
.views { padding-right: 11px; color: #2b344c; }
.views button { width: 24px; height: 24px; margin-right: 2px; }
.views .vsep { margin: 0 11px 0 7px; }
.views .on { background: #d9dde5; border-radius: 2px; }
.views .pct { width: auto; gap: 5px; margin: 0 12px 0 2px; color: #444c60; }
.views .zo { width: 10px; height: 2px; background: #2b344c; margin: 0 9px 0 0; }
.zoom { appearance: none; width: 142px; height: 14px; margin-right: 2px; background: linear-gradient(90deg, #2b344c 50%, #d5d8df 50%) 0 50% / 100% 2px no-repeat; }
.zoom::-webkit-slider-thumb { appearance: none; width: 12px; height: 12px; border: 1px solid #444; border-radius: 50%; background: #f5f7fa; }
.views button:last-child { margin: 0; }

/* overlays */
.activate { position: absolute; right: 10px; bottom: 18px; width: 207px; display: flex; flex-direction: column; color: rgba(120,120,120,.55); white-space: nowrap; pointer-events: none; }
.activate strong { font-weight: normal; font-size: 20px; line-height: 26px; }
.activate span { font-size: 14px; line-height: 20px; }
.sitemark { position: absolute; right: 11px; bottom: 7px; display: flex; align-items: flex-end; opacity: .85; pointer-events: none; white-space: nowrap; }
.swirl { width: 43px; height: 40px; }
.names { display: flex; flex-direction: column; }
.names b { font-size: 21px; line-height: 24px; color: #4a90d9; }
.names em { font: bold 16px/19px "Liberation Sans", sans-serif; color: #4fc274; }
```

FILE: colors.js
```js
const palettes = {
  theme: "#ffffff #000000 #e7e6e6 #44546a #5b9bd5 #ed7d31 #a5a5a5 #ffc000 #4472c4 #70ad47",
  shades:
    "#f2f2f2 #7f7f7f #d0cece #d6dce5 #deebf7 #fbe5d6 #ededed #fff2cc #dae3f3 #e2f0d9 " +
    "#d9d9d9 #595959 #afabab #adb9ca #bdd7ee #f8cbad #dbdbdb #ffe699 #b4c7e7 #c5e0b4 " +
    "#bfbfbf #404040 #767171 #8497b0 #9dc3e6 #f4b183 #c9c9c9 #ffd966 #8faadc #a9d18e " +
    "#a6a6a6 #262626 #3b3838 #333f50 #2e75b6 #c55a11 #7c7c7c #bf9000 #2f5597 #548235 " +
    "#808080 #0d0d0d #181717 #222a35 #1f4e79 #843c0c #525252 #7f6000 #203864 #385723",
  standard: "#c00000 #ff0000 #ffc000 #ffff00 #92d050 #00b050 #00b0f0 #0070c0 #002060 #7030a0"
};
for (const [id, list] of Object.entries(palettes)) {
  const box = document.getElementById(id);
  for (const color of list.split(" ")) {
    const b = document.createElement("button");
    b.style.background = color;
    b.setAttribute("aria-label", color);
    box.append(b);
  }
}
```
